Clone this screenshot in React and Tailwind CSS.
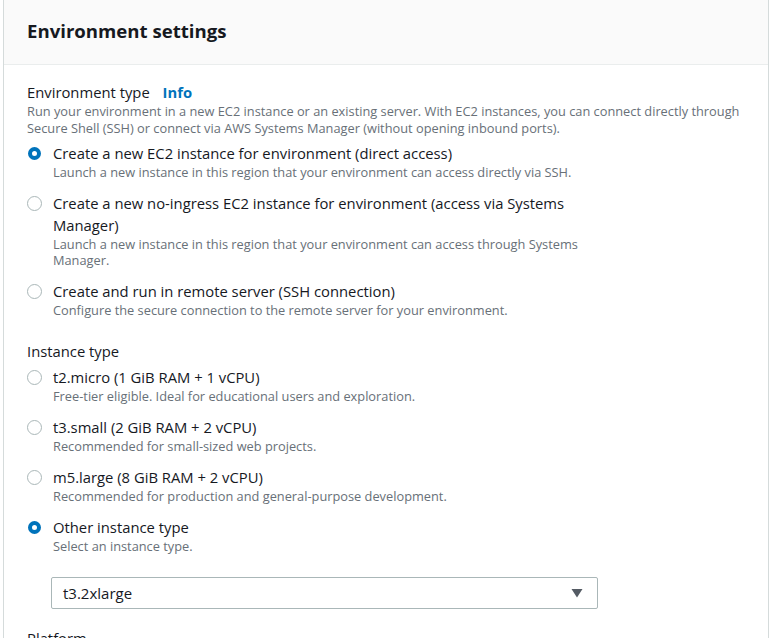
const envOptions = [
  {
    label: "Create a new EC2 instance for environment (direct access)",
    desc: "Launch a new instance in this region that your environment can access directly via SSH.",
    checked: true,
  },
  {
    label: "Create a new no-ingress EC2 instance for environment (access via Systems Manager)",
    desc: "Launch a new instance in this region that your environment can access through Systems Manager.",
  },
  {
    label: "Create and run in remote server (SSH connection)",
    desc: "Configure the secure connection to the remote server for your environment.",
  },
];

const instanceOptions = [
  { label: "t2.micro (1 GiB RAM + 1 vCPU)", desc: "Free-tier eligible. Ideal for educational users and exploration." },
  { label: "t3.small (2 GiB RAM + 2 vCPU)", desc: "Recommended for small-sized web projects." },
  { label: "m5.large (8 GiB RAM + 2 vCPU)", desc: "Recommended for production and general-purpose development." },
  { label: "Other instance type", desc: "Select an instance type.", checked: true },
];

function Radio({ checked }) {
  return (
    <span className="mt-[3px] flex h-[16px] w-[14px] shrink-0 items-center justify-center">
      {checked ? (
        <span className="block h-[13px] w-[13px] shrink-0 rounded-full border-[4px] border-[#0073bb] bg-white" />
      ) : (
        <span className="block h-[15px] w-[15px] shrink-0 rounded-full border-[1.5px] border-[#aab7b8] bg-white" />
      )}
    </span>
  );
}

function Option({ label, desc, checked }) {
  return (
    <div className="flex gap-[12px]">
      <Radio checked={checked} />
      <div className="w-[530px]">
        <div className="text-[14.8px] leading-[22px] text-[#16191f]">{label}</div>
        <div className="text-[12.8px] leading-[16px] text-[#687078]">{desc}</div>
      </div>
    </div>
  );
}

export default function App() {
  return (
    <div className="h-[638px] overflow-hidden bg-white font-['Open_Sans',sans-serif]">
      <div className="ml-[3px] w-[766px] border-x border-[#d5dbdb]">
        <div className="flex h-[65px] items-center border-b border-[#eaeded] bg-[#fafafa] px-[23px] pb-[2px]">
          <h2 className="text-[18.6px] font-bold text-[#16191f]">Environment settings</h2>
        </div>

        <div className="px-[23px] pt-[16px] pb-[20px]">
          <div className="text-[14.8px] leading-[22px] text-[#16191f]">
            Environment type <span className="ml-[9px] font-bold text-[#0073bb]">Info</span>
          </div>
          <p className="text-[12.8px] leading-[17px] text-[#687078]">
            Run your environment in a new EC2 instance or an existing server. With EC2 instances, you can connect directly through
            Secure Shell (SSH) or connect via AWS Systems Manager (without opening inbound ports).
          </p>
          <div className="mt-[5px] flex flex-col gap-[12px]">
            {envOptions.map((o) => (
              <Option key={o.label} {...o} />
            ))}
          </div>

          <div className="mt-[22px] text-[14.8px] leading-[22px] text-[#16191f]">Instance type</div>
          <div className="mt-[4px] flex flex-col gap-[12px]">
            {instanceOptions.map((o) => (
              <Option key={o.label} {...o} />
            ))}
          </div>

          <div className="mt-[23px] ml-[24px] flex h-[32px] w-[547px] items-center justify-between rounded-[2px] border border-[#aab7b8] pl-[11px] pr-[14px]">
            <span className="text-[15px] text-[#16191f]">t3.2xlarge</span>
            <svg width="12" height="10" viewBox="0 0 12 10">
              <path d="M0.5 1h11L6 9.5z" fill="#545b64" />
            </svg>
          </div>

          <div className="mt-[18px] text-[14.8px] leading-[22px] text-[#16191f]">Platform</div>
        </div>
      </div>
    </div>
  );
}
